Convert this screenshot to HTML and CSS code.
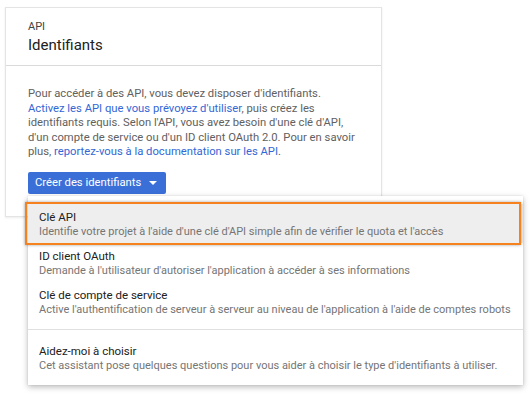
FILE: index.html
```html
<!DOCTYPE html>
<html lang="fr">
<head>
<meta charset="utf-8">
<link rel="stylesheet" href="styles.css">
</head>
<body>
<div class="stage">
  <section class="card">
    <header class="card-head">
      <div class="eyebrow">API</div>
      <h1 class="title">Identifiants</h1>
    </header>
    <div class="card-body">
      <p class="intro">Pour accéder à des API, vous devez disposer d'identifiants.
        <a class="link">Activez les API que vous prévoyez d'utiliser</a>, puis créez les identifiants requis. Selon l'API, vous avez besoin d'une clé d'API, d'un compte de service ou d'un ID client OAuth 2.0. Pour en savoir plus, <a class="link">reportez-vous à la documentation sur les API</a>.</p>
      <button class="btn">Créer des identifiants <span class="caret"></span></button>
    </div>
  </section>
  <div class="menu">
    <div class="item item-active">
      <div class="item-title">Clé API</div>
      <div class="item-desc">Identifie votre projet à l'aide d'une clé d'API simple afin de vérifier le quota et l'accès</div>
    </div>
    <div class="item">
      <div class="item-title">ID client OAuth</div>
      <div class="item-desc">Demande à l'utilisateur d'autoriser l'application à accéder à ses informations</div>
    </div>
    <div class="item">
      <div class="item-title">Clé de compte de service</div>
      <div class="item-desc">Active l'authentification de serveur à serveur au niveau de l'application à l'aide de comptes robots</div>
    </div>
    <div class="sep"></div>
    <div class="item">
      <div class="item-title">Aidez-moi à choisir</div>
      <div class="item-desc">Cet assistant pose quelques questions pour vous aider à choisir le type d'identifiants à utiliser.</div>
    </div>
  </div>
</div>
</body>
</html>
```
FILE: styles.css
```css
* { box-sizing: border-box; }
html, body { margin: 0; padding: 0; background: #fff; }
body {
  font-family: Roboto, "Liberation Sans", sans-serif;
  color: #212121;
  width: 530px;
  height: 394px;
  overflow: hidden;
}
.stage {
  position: relative;
  padding: 7px 0 0 5px;
}
.card {
  width: 377px;
  border: 1px solid #e4e4e4;
  box-shadow: 0 1px 2px rgba(0,0,0,0.08);
  background: #fff;
}
.card-head {
  padding: 12px 22px 10px;
  border-bottom: 1px solid #dadada;
}
.eyebrow {
  font-size: 11px;
  line-height: 14px;
  color: #424242;
}
.title {
  margin: 1px 0 0;
  font-size: 15px;
  line-height: 20px;
  font-weight: 400;
  color: #212121;
}
.card-body {
  padding: 21px 22px 22px;
}
.intro {
  margin: 0;
  font-size: 11.25px;
  line-height: 14.5px;
  color: #616161;
}
.link { color: #3367d6; }
.btn {
  margin-top: 12px;
  display: inline-flex;
  align-items: center;
  height: 22px;
  padding: 0 9px 0 7px;
  border: 0;
  border-radius: 2px;
  background: #3b6fd8;
  color: #fff;
  font-family: inherit;
  font-size: 11.25px;
}
.caret {
  margin-left: 8px;
  width: 0;
  height: 0;
  border-left: 4px solid transparent;
  border-right: 4px solid transparent;
  border-top: 4px solid #fff;
}
.menu {
  position: absolute;
  left: 28px;
  top: 196px;
  width: 495px;
  padding: 8px 0;
  background: #fff;
  box-shadow: 0 2px 6px rgba(0,0,0,0.28), 0 0 1px rgba(0,0,0,0.15);
}
.item {
  position: relative;
  padding: 6px 11px 4px;
}
.item-active { background: #eeeeee; }
.item-active::after {
  content: "";
  position: absolute;
  left: -3px;
  right: 2px;
  top: -2px;
  bottom: -2px;
  border: 2px solid #f5821f;
  box-shadow: 0 0 3px rgba(0,0,0,0.35);
}
.item-title {
  font-size: 11.5px;
  line-height: 14px;
  color: #212121;
}
.item-desc {
  margin-top: 1px;
  font-size: 11px;
  line-height: 14px;
  color: #757575;
}
.sep {
  margin: 8px 0;
  height: 1px;
  background: #e0e0e0;
}
```
